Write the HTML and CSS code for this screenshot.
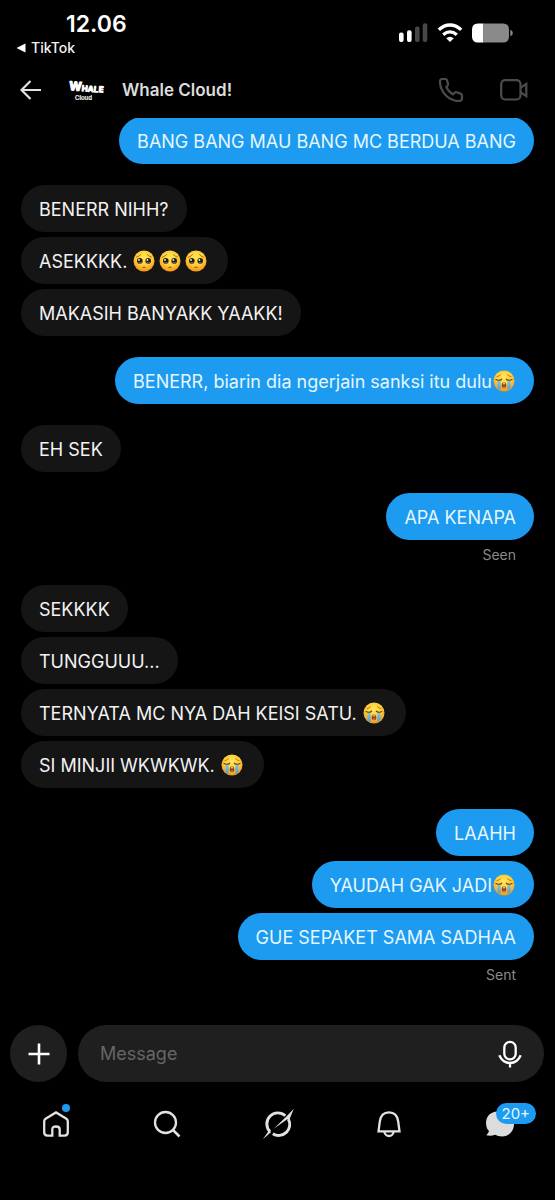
FILE: index.html
```html
<!DOCTYPE html>
<html lang="id">
<head>
<meta charset="utf-8">
<meta name="viewport" content="width=device-width, initial-scale=1">
<title>Whale Cloud!</title>
<link rel="stylesheet" href="styles.css">
</head>
<body>
<svg class="defs" aria-hidden="true">
  <defs>
    <radialGradient id="face" cx="0.5" cy="0.35" r="0.7">
      <stop offset="0" stop-color="#ffe95c"/>
      <stop offset="0.55" stop-color="#ffcb35"/>
      <stop offset="1" stop-color="#ee8a12"/>
    </radialGradient>
    <linearGradient id="tear" x1="0" y1="0" x2="0" y2="1">
      <stop offset="0" stop-color="#8fc4d8"/>
      <stop offset="1" stop-color="#4f9ddb"/>
    </linearGradient>
    <symbol id="pleading" viewBox="0 0 24 24">
      <circle cx="12" cy="12" r="10.500" fill="url(#face)"/>
      <path d="M4.500 8.200Q7 7.600 8.600 5.600M19.500 8.200Q17 7.600 15.400 5.600" fill="none" stroke="#a8640f" stroke-width="0.900" stroke-linecap="round"/>
      <circle cx="7.800" cy="11.900" r="2.800" fill="#2c1c10"/>
      <circle cx="16.200" cy="11.900" r="2.800" fill="#2c1c10"/>
      <circle cx="7" cy="10.900" r="0.900" fill="#fff"/>
      <circle cx="15.400" cy="10.900" r="0.900" fill="#fff"/>
      <path d="M6.400 13.600q1.500 0.900 3 0M14.700 13.600q1.500 0.900 3 0" fill="none" stroke="#9fb0b8" stroke-width="0.700"/>
      <path d="M10.700 18.400q1.300-0.900 2.600 0" fill="none" stroke="#8a4a0c" stroke-width="1" stroke-linecap="round"/>
    </symbol>
    <symbol id="sob" viewBox="0 0 24 24">
      <circle cx="12" cy="12" r="10.500" fill="url(#face)"/>
      <path d="M5 7.800Q7 7.200 8.400 5.800M19 7.800Q17 7.200 15.600 5.800" fill="none" stroke="#a8640f" stroke-width="0.800" stroke-linecap="round"/>
      <path d="M5.400 11.500h3.300v9.500Q6.500 20.300 5.400 19ZM18.600 11.500h-3.300v9.500Q17.500 20.300 18.600 19Z" fill="url(#tear)"/>
      <path d="M4 10.600Q7 12.200 9.700 10.200M20 10.600Q17 12.200 14.300 10.200" fill="none" stroke="#6d3b0b" stroke-width="1.100" stroke-linecap="round"/>
      <ellipse cx="12" cy="16.300" rx="2.300" ry="2.900" fill="#8a430c"/>
      <path d="M10.300 15.300q1.700-1.900 3.400 0Z" fill="#fff"/>
      <ellipse cx="12" cy="17.900" rx="1.300" ry="0.900" fill="#e8683c"/>
    </symbol>
  </defs>
</svg>

<div class="app">
  <div class="status">
    <div class="status-left">
      <time class="clock">12.06</time>
      <a class="return" href="#"><svg width="10" height="10" viewBox="0 0 10 10" aria-hidden="true"><path d="M0.500 5L9.500 0.500v9Z" fill="#fff"/></svg>TikTok</a>
    </div>
    <div class="status-right">
      <svg width="29" height="20" viewBox="0 0 29 20" role="img" aria-label="Signal">
        <rect x="0" y="9.500" width="4.600" height="9.500" rx="2" fill="#fff"/>
        <rect x="8" y="7.300" width="4.600" height="11.700" rx="2" fill="#fff"/>
        <rect x="16" y="3.600" width="4.600" height="15.400" rx="2" fill="#474747"/>
        <rect x="23.700" y="0.200" width="4.600" height="18.800" rx="2" fill="#474747"/>
      </svg>
      <svg width="26" height="20" viewBox="0 0 26 20" role="img" aria-label="Wi-Fi">
        <path d="M1.800 6.800Q7 2 13 2t11.200 4.800M6.200 11.800Q9.500 8.900 13 8.900t6.800 2.900" fill="none" stroke="#fff" stroke-width="3.300"/>
        <path d="M9.200 15.200q3.800-3 7.600 0l-3.800 3.800Z" fill="#fff"/>
      </svg>
      <svg width="41" height="20" viewBox="0 0 41 20" role="img" aria-label="Battery">
        <path d="M6 0.500H11.500V19.500H6Q0 19.500 0 13.500V6.500Q0 0.500 6 0.500Z" fill="#fff"/>
        <path d="M11.500 0.500H31Q37 0.500 37 6.500V13.500Q37 19.500 31 19.500H11.500Z" fill="#8a8a8a"/>
        <path d="M38.300 6.800q2.500 0.800 2.500 3.200t-2.500 3.200Z" fill="#8a8a8a"/>
      </svg>
    </div>
  </div>

  <header class="header">
    <button class="icon-btn" aria-label="Back">
      <svg width="22" height="20" viewBox="0 0 22 20"><path d="M10.500 1L1.500 10l9 9M1.500 10H21" fill="none" stroke="#e2e2e2" stroke-width="2.200"/></svg>
    </button>
    <svg class="avatar" width="38" height="24" viewBox="0 0 38 24" role="img" aria-label="Whale Cloud">
      <g fill="#fff" stroke="#fff" stroke-linejoin="round">
        <text class="logo-big" x="1" y="12" rotate="4" stroke-width="1.200">W</text>
        <text class="logo-mid" x="13.500 19.500 25.500 30.500" y="13 13.500 14 14" rotate="5" stroke-width="1">HALE</text>
        <text class="logo-small" x="7" y="22" stroke-width="0.200">Cloud</text>
      </g>
    </svg>
    <h1 class="name">Whale Cloud!</h1>
    <button class="icon-btn" aria-label="Call">
      <svg width="26" height="26" viewBox="0 0 26 26"><path d="M4 2H7.200Q8.600 2 9 3.300L10 6.900Q10.300 8.200 9.200 9L8.300 9.800Q10.500 15 15.300 17.400L16.500 15.900Q17.300 14.900 18.600 15.300L22.500 16.600Q24 17.100 24 18.600V21.300Q24 24 21.300 24C10.800 24 2 15 2 4.500Q2 2 4 2Z" fill="none" stroke="#4c4c4c" stroke-width="2.200" stroke-linejoin="round"/></svg>
    </button>
    <button class="icon-btn" aria-label="Video call">
      <svg width="28" height="22" viewBox="0 0 28 22"><rect x="1.200" y="1.200" width="19.300" height="19.300" rx="4" fill="none" stroke="#4c4c4c" stroke-width="2.200"/><path d="M20.500 8.800L26.300 4.800V17.200L20.500 13.200" fill="none" stroke="#4c4c4c" stroke-width="2.200"/></svg>
    </button>
  </header>

  <main class="chat">
    <section class="group out">
      <p class="bubble">BANG BANG MAU BANG MC BERDUA BANG</p>
    </section>
    <section class="group">
      <p class="bubble">BENERR NIHH?</p>
      <p class="bubble">ASEKKKK. <svg class="emoji" role="img" aria-label="🥺"><use href="#pleading"/></svg><svg class="emoji" role="img" aria-label="🥺"><use href="#pleading"/></svg><svg class="emoji" role="img" aria-label="🥺"><use href="#pleading"/></svg></p>
      <p class="bubble">MAKASIH BANYAKK YAAKK!</p>
    </section>
    <section class="group out">
      <p class="bubble">BENERR, biarin dia ngerjain sanksi itu dulu<svg class="emoji" role="img" aria-label="😭"><use href="#sob"/></svg></p>
    </section>
    <section class="group">
      <p class="bubble">EH SEK</p>
    </section>
    <section class="group out">
      <p class="bubble">APA KENAPA</p>
      <p class="receipt">Seen</p>
    </section>
    <section class="group">
      <p class="bubble">SEKKKK</p>
      <p class="bubble">TUNGGUUU...</p>
      <p class="bubble">TERNYATA MC NYA DAH KEISI SATU. <svg class="emoji" role="img" aria-label="😭"><use href="#sob"/></svg></p>
      <p class="bubble">SI MINJII WKWKWK. <svg class="emoji" role="img" aria-label="😭"><use href="#sob"/></svg></p>
    </section>
    <section class="group out">
      <p class="bubble">LAAHH</p>
      <p class="bubble">YAUDAH GAK JADI<svg class="emoji" role="img" aria-label="😭"><use href="#sob"/></svg></p>
      <p class="bubble">GUE SEPAKET SAMA SADHAA</p>
      <p class="receipt">Sent</p>
    </section>
  </main>

  <form class="composer">
    <button class="add" type="button" aria-label="Add">
      <svg width="22" height="22" viewBox="0 0 22 22"><path d="M11 0.500v21M0.500 11h21" stroke="#fff" stroke-width="2.600"/></svg>
    </button>
    <div class="field">
      <input class="input" type="text" placeholder="Message" aria-label="Message">
      <button class="icon-btn" type="button" aria-label="Voice message">
        <svg width="24" height="28" viewBox="0 0 24 28"><rect x="6.300" y="1.800" width="11.400" height="17.600" rx="5.700" fill="none" stroke="#fff" stroke-width="2.300"/><path d="M1.300 15.300Q4.500 23 12 23t10.700-7.700M12 23v4.500" fill="none" stroke="#fff" stroke-width="2.300"/></svg>
      </button>
    </div>
  </form>

  <nav class="tabs">
    <a class="tab" href="#" aria-label="Home">
      <span class="tab-icon">
        <svg width="28" height="28" viewBox="0 0 28 28"><path d="M3.600 8.700L14 2.400L24.400 8.700Q25.800 9.600 25.800 11.200V22.300Q25.800 25.600 22.500 25.600H17.700V19.300Q17.700 16.500 14 16.500T10.300 19.300V25.600H5.500Q2.200 25.600 2.200 22.300V11.200Q2.200 9.600 3.600 8.700Z" fill="none" stroke="#e2e2e2" stroke-width="2.300"/></svg>
        <span class="dot"></span>
      </span>
    </a>
    <a class="tab" href="#" aria-label="Search">
      <svg width="28" height="28" viewBox="0 0 28 28"><circle cx="12.500" cy="12.500" r="10.500" fill="none" stroke="#e2e2e2" stroke-width="2.300"/><path d="M20 20l6.500 6.500" stroke="#e2e2e2" stroke-width="2.500"/></svg>
    </a>
    <a class="tab" href="#" aria-label="Grok">
      <svg width="32" height="32" viewBox="0 0 32 32">
        <path d="M23.300 7.800A11 11 0 0 0 8 23.600" fill="none" stroke="#e2e2e2" stroke-width="2.900"/>
        <path d="M26.300 11A11 11 0 0 1 10.800 25.700" fill="none" stroke="#e2e2e2" stroke-width="2.900"/>
        <path d="M31.800 0.800L27.600 11L25.200 11.200L11.800 20.800L24.400 8.600Z" fill="#e2e2e2"/>
        <path d="M0.800 31.200L7 22.500L9.200 24Z" fill="#e2e2e2"/>
      </svg>
    </a>
    <a class="tab" href="#" aria-label="Notifications">
      <svg width="28" height="28" viewBox="0 0 28 28"><path d="M3.500 21.300L4.800 11.500Q6 2.400 14 2.400T23.200 11.500L24.500 21.300Z" fill="none" stroke="#e2e2e2" stroke-width="2.300"/><path d="M9.300 22Q10.500 26 14 26T18.700 22" fill="none" stroke="#e2e2e2" stroke-width="2.300"/></svg>
    </a>
    <a class="tab" href="#" aria-label="Messages, 20+ unread">
      <span class="tab-icon">
        <svg width="30" height="28" viewBox="0 0 30 28"><path d="M12.500 1.500C5.500 1.500 1 6.500 1 13Q1 18 4 21Q3.500 23.500 1.200 25.300Q6 26.500 10 24.800Q13 26.500 17 26.500C24 26.500 29 21 29 14Q29 1.500 12.500 1.500Z" fill="#dcdcdc"/></svg>
        <span class="badge">20+</span>
      </span>
    </a>
  </nav>
</div>
</body>
</html>
```
FILE: styles.css
```css
* { box-sizing: border-box; }

body {
  margin: 0;
  background: #000;
  color: #f2f2f2;
  font-family: Inter, "Liberation Sans", sans-serif;
}

h1, p { margin: 0; }

button {
  padding: 0;
  border: 0;
  background: none;
  cursor: pointer;
}

a { color: inherit; text-decoration: none; }
svg { display: block; flex: none; }

.defs { position: absolute; width: 0; height: 0; }

.app {
  display: flex;
  flex-direction: column;
  height: 100vh;
}

.status {
  display: flex;
  justify-content: space-between;
  padding: 10px 42px 0 16px;
}

.status-left { display: flex; flex-direction: column; }

.clock {
  padding-left: 50px;
  font-size: 23px;
  font-weight: 600;
  line-height: 28px;
  color: #fff;
}

.return {
  display: flex;
  align-items: center;
  gap: 5px;
  font-size: 14px;
  font-weight: 500;
  line-height: 20px;
}

.status-right {
  display: flex;
  align-items: flex-start;
  gap: 9px;
  padding-top: 13px;
}

.header {
  display: flex;
  align-items: center;
  height: 60px;
  padding: 4px 27px 0 20px;
}

.icon-btn { display: flex; flex: none; }
.avatar { margin-left: 26px; }

.logo-big, .logo-mid, .logo-small { font-family: Inter, sans-serif; font-weight: 700; }
.logo-big { font-size: 12px; }
.logo-mid { font-size: 8px; }
.logo-small { font-size: 6px; font-weight: 500; }

.name {
  flex: 1;
  padding-left: 16px;
  font-size: 17px;
  font-weight: 600;
  line-height: 24px;
  color: #dcdcdc;
}

.header .icon-btn + .icon-btn { margin-left: 36px; }

.chat {
  display: flex;
  flex: 1;
  flex-direction: column;
  justify-content: flex-end;
  gap: 21px;
  min-height: 0;
  overflow: hidden;
  padding: 0 21px 41px;
}

.group {
  display: flex;
  flex: none;
  flex-direction: column;
  align-items: flex-start;
  gap: 5px;
}

.out { align-items: flex-end; }

.bubble {
  display: flex;
  align-items: center;
  padding: 13px 18px 10px;
  border-radius: 24px;
  background: #151515;
  font-size: 18px;
  line-height: 24px;
  white-space: pre-wrap;
}

.out .bubble { background: #1d9bf0; color: #e4f7ff; }

.emoji { width: 24px; height: 24px; margin: -1px 2px 1px 0; }
.out .emoji { margin-right: 0; }

.receipt {
  padding-right: 18px;
  font-size: 14px;
  line-height: 19px;
  color: #8a8a8a;
}

.composer {
  display: flex;
  gap: 11px;
  padding: 0 11px 0 10px;
}

.add {
  display: flex;
  flex: none;
  align-items: center;
  justify-content: center;
  width: 57px;
  height: 57px;
  border-radius: 50%;
  background: #1f1f1f;
}

.field {
  display: flex;
  flex: 1;
  align-items: center;
  padding: 0 22px;
  border-radius: 29px;
  background: #1f1f1f;
}

.input {
  flex: 1;
  min-width: 0;
  padding: 0;
  border: 0;
  outline: 0;
  background: none;
  color: #fff;
  font: 18px/24px Inter, "Liberation Sans", sans-serif;
}

.input::placeholder { color: #666; opacity: 1; }

.tabs {
  display: grid;
  grid-template-columns: repeat(5, 1fr);
  padding: 26px 0 60px;
}

.tab {
  display: flex;
  align-items: center;
  justify-content: center;
  height: 32px;
}

.tab-icon { position: relative; }

.dot {
  position: absolute;
  top: -6px;
  right: 0;
  width: 8px;
  height: 8px;
  border-radius: 50%;
  background: #1d9bf0;
}

.badge {
  position: absolute;
  top: -7px;
  left: 11px;
  padding: 0 6px;
  border-radius: 11px;
  background: #1d9bf0;
  color: #e4f7ff;
  font-size: 15px;
  line-height: 21px;
}
```
